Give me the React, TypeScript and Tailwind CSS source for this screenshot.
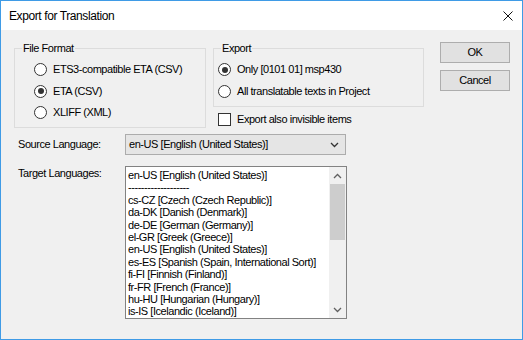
const targetLanguages = [
  'en-US [English (United States)]',
  '-------------------',
  'cs-CZ [Czech (Czech Republic)]',
  'da-DK [Danish (Denmark)]',
  'de-DE [German (Germany)]',
  'el-GR [Greek (Greece)]',
  'en-US [English (United States)]',
  'es-ES [Spanish (Spain, International Sort)]',
  'fi-FI [Finnish (Finland)]',
  'fr-FR [French (France)]',
  'hu-HU [Hungarian (Hungary)]',
  'is-IS [Icelandic (Iceland)]',
];

function Radio({ label, checked }: { label: string; checked?: boolean }) {
  return (
    <div className="flex items-center h-[13px]">
      <span className="w-[13px] h-[13px] shrink-0 rounded-full border border-[#333] bg-white flex items-center justify-center">
        {checked && <span className="w-[6px] h-[6px] rounded-full bg-[#333]" />}
      </span>
      <span className="ml-[6px] leading-[13px] whitespace-nowrap">{label}</span>
    </div>
  );
}

function GroupBox({ title, className, children }: { title: string; className: string; children: React.ReactNode }) {
  return (
    <div className={`relative border border-[#dcdcdc] ${className}`}>
      <span className="absolute -top-[7px] left-[7px] px-[1px] bg-[#f0f0f0] leading-[13px]">{title}</span>
      {children}
    </div>
  );
}

function Chevron({ up, color }: { up?: boolean; color: string }) {
  return (
    <svg width="9" height="6" viewBox="0 0 9 6">
      <path d={up ? 'M1 5 L4.5 1.5 L8 5' : 'M1 1 L4.5 4.5 L8 1'} fill="none" stroke={color} strokeWidth="1.3" />
    </svg>
  );
}

function Button({ label }: { label: string }) {
  return (
    <button className="w-[70px] h-[21px] border border-[#adadad] bg-[#e1e1e1] leading-[13px] text-black">
      {label}
    </button>
  );
}

export default function App() {
  return (
    <div className="w-[523px] h-[340px] border border-[#3f9be6] bg-[#f0f0f0] flex flex-col font-['Liberation_Sans',Arial,sans-serif] text-[11px] tracking-[-0.45px] text-black">
      <div className="h-[29px] bg-white flex items-center justify-between pl-[8px] pr-[9px]">
        <span className="text-[12px] tracking-[-0.4px]">Export for Translation</span>
        <svg width="10" height="10" viewBox="0 0 10 10">
          <path d="M0.5 0.5 L9.5 9.5 M9.5 0.5 L0.5 9.5" stroke="#111" strokeWidth="1" />
        </svg>
      </div>

      <div className="flex-1 pl-[13px] pt-[12px]">
        <div className="flex items-start">
          <div className="pt-[6px] flex gap-[7px]">
            <GroupBox title="File Format" className="w-[192px] h-[80px] pl-[19px] pt-[14px] flex flex-col gap-[8.5px]">
              <Radio label="ETS3-compatible ETA (CSV)" />
              <Radio label="ETA (CSV)" checked />
              <Radio label="XLIFF (XML)" />
            </GroupBox>
            <div className="flex flex-col">
              <GroupBox title="Export" className="w-[211px] h-[59px] pl-[4px] pt-[14px] flex flex-col gap-[9px]">
                <Radio label="Only [0101 01] msp430" checked />
                <Radio label="All translatable texts in Project" />
              </GroupBox>
              <div className="mt-[6px] ml-[5px] flex items-center h-[13px]">
                <span className="w-[13px] h-[13px] border border-[#333] bg-white" />
                <span className="ml-[6px] leading-[13px]">Export also invisible items</span>
              </div>
            </div>
          </div>
          <div className="ml-auto mr-[12px] flex flex-col gap-[7px]">
            <Button label="OK" />
            <Button label="Cancel" />
          </div>
        </div>

        <div className="mt-[6px] pl-[4px] flex items-center">
          <span className="w-[107px] leading-[13px]">Source Language:</span>
          <div className="w-[221px] h-[21px] border border-[#acacac] bg-[#e5e5e5] flex items-center pl-[3px]">
            <span className="flex-1 leading-[13px]">en-US [English (United States)]</span>
            <span className="w-[17px] flex justify-center mr-[2px]">
              <Chevron color="#333" />
            </span>
          </div>
        </div>

        <div className="mt-[11px] pl-[4px] flex items-start">
          <span className="w-[107px] pt-[1px] leading-[13px]">Target Languages:</span>
          <div className="w-[222px] h-[153px] border border-[#828282] bg-white flex">
            <div className="flex-1 pl-[2px] pt-[2px] overflow-hidden">
              {targetLanguages.map((lang, index) => (
                <div key={index} className="leading-[12.4px] whitespace-nowrap">{lang}</div>
              ))}
            </div>
            <div className="w-[17px] bg-[#f0f0f0] flex flex-col">
              <div className="h-[17px] flex items-center justify-center">
                <Chevron up color="#606060" />
              </div>
              <div className="h-[56px] mx-[1px] bg-[#cdcdcd]" />
              <div className="flex-1" />
              <div className="h-[17px] flex items-center justify-center">
                <Chevron color="#606060" />
              </div>
            </div>
          </div>
        </div>
      </div>
    </div>
  );
}
